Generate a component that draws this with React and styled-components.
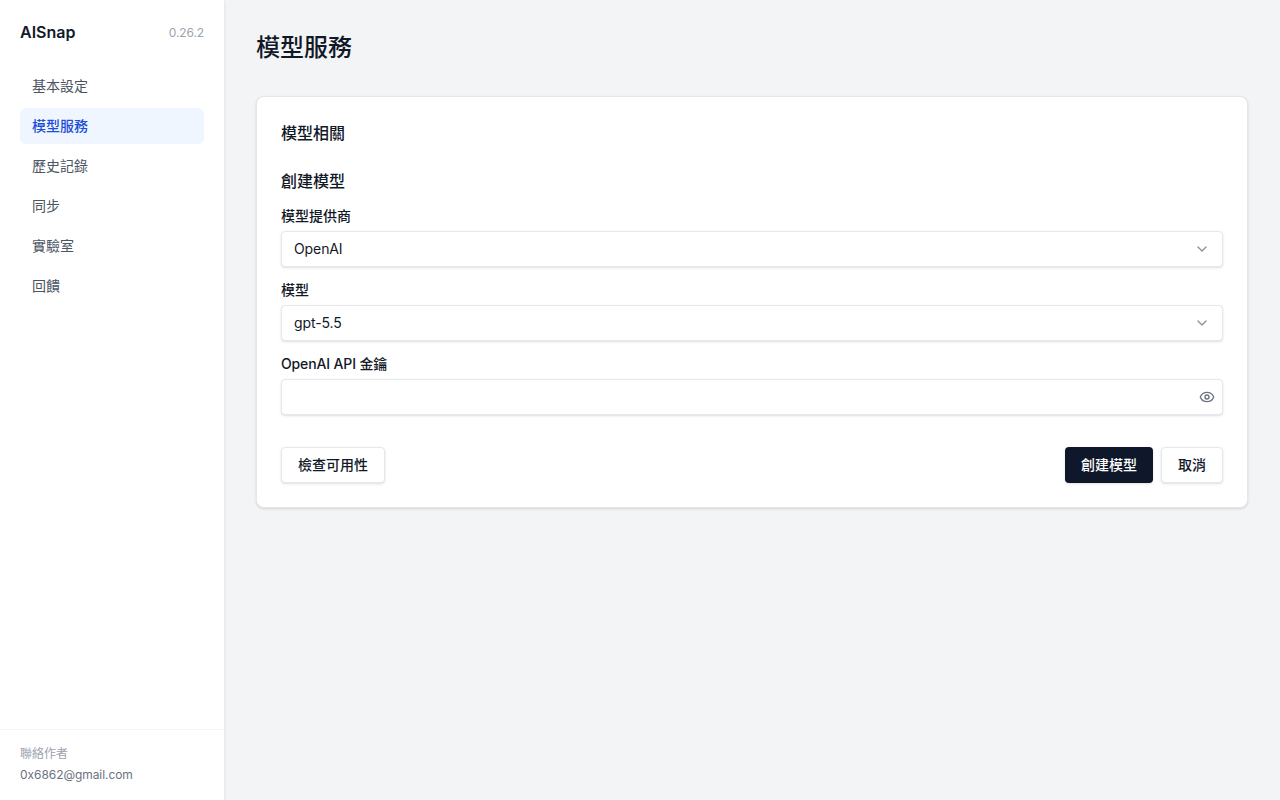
import React from "react";
import styled, { createGlobalStyle } from "styled-components";
import { ChevronDown, Eye } from "lucide-react";

const Global = createGlobalStyle`
  html, body { margin: 0; padding: 0; height: 100%; }
  #root { height: 100%; }
  * { box-sizing: border-box; }
  body {
    font-family: Inter, "Noto Sans CJK TC", sans-serif;
    color: #111827;
    background: #f3f4f6;
  }
`;

const Layout = styled.div`
  display: flex;
  height: 800px;
`;
const Sidebar = styled.aside`
  width: 224px;
  flex: none;
  background: #fff;
  display: flex;
  flex-direction: column;
  box-shadow: 0 1px 3px rgba(0,0,0,.1), 0 1px 2px -1px rgba(0,0,0,.1);
`;
const Brand = styled.div`
  display: flex;
  justify-content: space-between;
  align-items: center;
  height: 64px;
  padding: 0 20px;
`;
const BrandName = styled.span`
  font-size: 16px;
  font-weight: 600;
  color: #111827;
`;
const Version = styled.span`
  font-size: 12px;
  letter-spacing: -0.1px;
  color: #9ca3af;
`;
const Nav = styled.nav`
  flex: 1;
  display: flex;
  flex-direction: column;
  gap: 4px;
  padding: 4px 20px 0;
`;
const NavItem = styled.a`
  display: flex;
  align-items: center;
  height: 36px;
  padding: 0 12px;
  border-radius: 6px;
  font-size: 14px;
  line-height: 20px;
  color: ${p => (p.$active ? "#1d4ed8" : "#4b5563")};
  background: ${p => (p.$active ? "#eff6ff" : "transparent")};
  font-weight: ${p => (p.$active ? 500 : 400)};
`;
const Footer = styled.footer`
  border-top: 1px solid #f3f4f6;
  padding: 15px 20px 0;
  height: 71px;
  font-size: 12px;
`;
const FooterLabel = styled.div`
  color: #9ca3af;
  line-height: 18px;
  margin-bottom: 3px;
`;
const FooterMail = styled.div`
  color: #6b7280;
  letter-spacing: -0.06px;
  line-height: 18px;
`;
const Main = styled.main`
  flex: 1;
  padding: 32px;
`;
const Title = styled.h1`
  margin: 0 0 32px;
  font-size: 24px;
  line-height: 32px;
  font-weight: 500;
  color: #111827;
`;
const Card = styled.section`
  background: #fff;
  border: 1px solid #e5e7eb;
  border-radius: 8px;
  padding: 24px;
  box-shadow: 0 1px 3px rgba(0,0,0,.1), 0 1px 2px -1px rgba(0,0,0,.1);
`;
const CardTitle = styled.h2`
  margin: 0 0 24px;
  font-size: 16px;
  line-height: 24px;
  font-weight: 500;
  color: #111827;
`;
const SubTitle = styled.h3`
  margin: 0 0 13px;
  font-size: 16px;
  line-height: 24px;
  font-weight: 500;
  color: #111827;
`;
const Field = styled.div`
  margin-bottom: 13px;
`;
const Label = styled.label`
  display: block;
  font-size: 14px;
  line-height: 20px;
  font-weight: 500;
  letter-spacing: ${p => (p.$latin ? "-0.14px" : "0")};
  color: #111827;
  margin-bottom: 5px;
`;
const Control = styled.div`
  position: relative;
  display: flex;
  align-items: center;
  justify-content: space-between;
  height: 36px;
  padding: 0 12px;
  border: 1px solid #e5e7eb;
  border-radius: 4px;
  background: #fff;
  font-size: 14px;
  letter-spacing: -0.1px;
  color: #111827;
  box-shadow: 0 1px 3px rgba(0,0,0,.1), 0 1px 2px -1px rgba(0,0,0,.1);
`;
const Value = styled.span`
  margin-top: -2px;
`;
const Chevron = styled(ChevronDown)`
  width: 16px;
  height: 16px;
  color: #8b919c;
`;
const EyeIcon = styled(Eye)`
  position: absolute;
  right: 7px;
  top: 9px;
  width: 16px;
  height: 16px;
  color: #6b7280;
`;
const Actions = styled.div`
  display: flex;
  justify-content: space-between;
  margin-top: 32px;
`;
const Group = styled.div`
  display: flex;
  gap: 8px;
`;
const Button = styled.button`
  height: 36px;
  padding: 0 16px 2px;
  border-radius: 4px;
  font-family: inherit;
  font-size: 14px;
  font-weight: 500;
  border: ${p => (p.$primary ? "none" : "1px solid #e5e7eb")};
  background: ${p => (p.$primary ? "#0f172a" : "#fff")};
  color: ${p => (p.$primary ? "#fff" : "#111827")};
  box-shadow: 0 1px 3px rgba(0,0,0,.1), 0 1px 2px -1px rgba(0,0,0,.1);
`;

const items = ["基本設定", "模型服務", "歷史記錄", "同步", "實驗室", "回饋"];

export default function App() {
  return (
    <Layout>
      <Global />
      <Sidebar>
        <Brand>
          <BrandName>AISnap</BrandName>
          <Version>0.26.2</Version>
        </Brand>
        <Nav>
          {items.map(t => (
            <NavItem key={t} $active={t === "模型服務"}>{t}</NavItem>
          ))}
        </Nav>
        <Footer>
          <FooterLabel>聯絡作者</FooterLabel>
          <FooterMail>0x6862@gmail.com</FooterMail>
        </Footer>
      </Sidebar>
      <Main>
        <Title>模型服務</Title>
        <Card>
          <CardTitle>模型相關</CardTitle>
          <SubTitle>創建模型</SubTitle>
          <Field>
            <Label>模型提供商</Label>
            <Control><Value>OpenAI</Value><Chevron strokeWidth={2} /></Control>
          </Field>
          <Field>
            <Label>模型</Label>
            <Control><Value>gpt-5.5</Value><Chevron strokeWidth={2} /></Control>
          </Field>
          <Field>
            <Label $latin>OpenAI API 金鑰</Label>
            <Control><EyeIcon strokeWidth={2} /></Control>
          </Field>
          <Actions>
            <Button>檢查可用性</Button>
            <Group>
              <Button $primary>創建模型</Button>
              <Button>取消</Button>
            </Group>
          </Actions>
        </Card>
      </Main>
    </Layout>
  );
}
